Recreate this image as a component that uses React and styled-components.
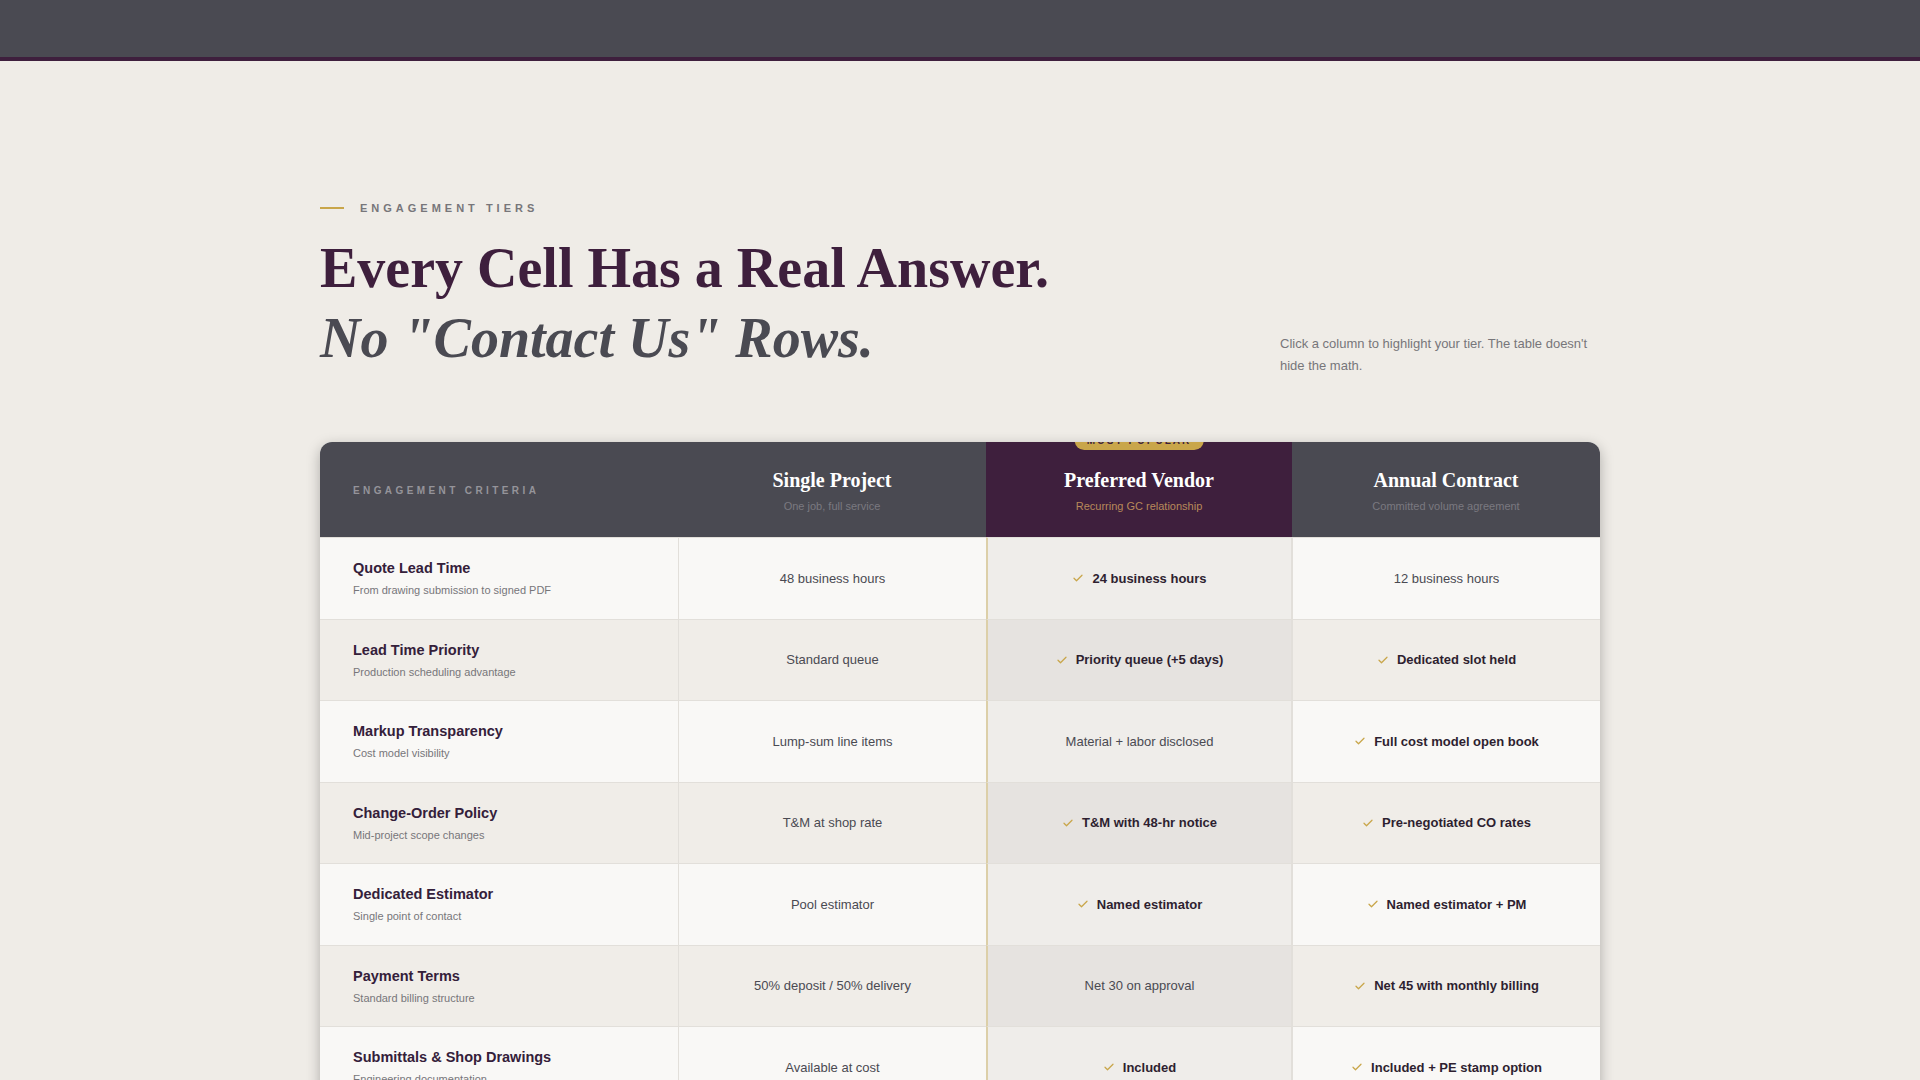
import React from 'react';
import styled, { createGlobalStyle, css } from 'styled-components';

const GlobalStyle = createGlobalStyle`
  body {
    margin: 0;
    background: #efece7;
    font-family: "Liberation Sans", Arial, sans-serif;
  }
`;

const TopBar = styled.header`
  height: 57px;
  background: #4a4a52;
  border-bottom: 4px solid #3e1f3d;
`;

const Section = styled.section`
  width: 1280px;
  margin: 0 auto;
  padding-top: 141px;
`;

const Intro = styled.div`
  display: flex;
  justify-content: space-between;
  align-items: flex-end;
`;

const Eyebrow = styled.div`
  display: flex;
  align-items: center;
  gap: 16px;
  font-size: 11px;
  font-weight: 700;
  letter-spacing: 4px;
  color: #77767a;

  &::before {
    content: '';
    width: 24px;
    height: 2px;
    background: #c9a64a;
  }
`;

const Title = styled.h1`
  margin: 19px 0 0;
  font-family: "Liberation Serif", "Times New Roman", serif;
  font-size: 56px;
  line-height: 70px;
  font-weight: 700;
  color: #3e1f3d;
`;

const TitleItalic = styled.span`
  display: block;
  font-style: italic;
  color: #4a4a52;
`;

const Lead = styled.p`
  width: 320px;
  margin: 0 0 -4px;
  font-size: 13px;
  line-height: 22px;
  color: #77767a;
`;

const Table = styled.div`
  margin-top: 69px;
  display: grid;
  grid-template-columns: 358px 308px 306px 308px;
  grid-template-rows: 95px;
  grid-auto-rows: 81.5px;
  border-radius: 12px;
  overflow: hidden;
  box-shadow: 0 4px 14px rgba(0, 0, 0, 0.28);
  background: #f9f8f6;
`;

const HeadCell = styled.div`
  position: relative;
  display: flex;
  flex-direction: column;
  justify-content: center;
  align-items: center;
  padding-top: 2px;
  background: ${({ $featured }) => ($featured ? '#3e1f3d' : '#4a4a52')};
  ${({ $label }) =>
    $label &&
    css`
      align-items: flex-start;
      padding-left: 33px;
    `}
`;

const HeadLabel = styled.div`
  font-size: 10px;
  font-weight: 700;
  letter-spacing: 3.4px;
  color: #95949a;
`;

const HeadTitle = styled.div`
  font-family: "Liberation Serif", "Times New Roman", serif;
  font-size: 20px;
  font-weight: 700;
  color: #ffffff;
`;

const HeadSub = styled.div`
  margin-top: 8px;
  font-size: 11px;
  color: ${({ $featured }) => ($featured ? '#b8895a' : '#7a7980')};
`;

const Badge = styled.div`
  position: absolute;
  top: -11px;
  left: 50%;
  transform: translateX(-50%);
  padding: 4px 12px;
  border-radius: 10px;
  background: #c9a64a;
  font-size: 10px;
  font-weight: 700;
  letter-spacing: 2px;
  color: #3e1f3d;
  white-space: nowrap;
`;

const rowBg = (even, featured) =>
  featured ? (even ? '#e6e3e0' : '#efedea') : even ? '#f0ede8' : '#f9f8f6';

const Cell = styled.div`
  box-sizing: border-box;
  display: flex;
  align-items: center;
  justify-content: center;
  gap: 8px;
  border-top: 1px solid #e2dfda;
  border-left: 1px solid #e2dfda;
  background: ${({ $even, $featured }) => rowBg($even, $featured)};
  font-size: 13px;
  color: ${({ $strong }) => ($strong ? '#2e1f30' : '#4a4a52')};
  font-weight: ${({ $strong }) => ($strong ? 700 : 400)};
  ${({ $featured }) =>
    $featured &&
    css`
      border-left: 2px solid #dccfa8;
      border-right: 1px solid #e2dfda;
    `}
`;

const CriteriaCell = styled(Cell)`
  flex-direction: column;
  align-items: flex-start;
  justify-content: center;
  gap: 0;
  padding-left: 33px;
  border-left: none;
`;

const CriteriaName = styled.div`
  font-size: 14.5px;
  font-weight: 700;
  color: #34203a;
`;

const CriteriaNote = styled.div`
  margin-top: 8px;
  font-size: 11px;
  color: #77767a;
`;

const Check = () => (
  <svg width="12" height="12" viewBox="0 0 24 24" fill="none" stroke="#c9a64a" strokeWidth="2.5" strokeLinecap="round" strokeLinejoin="round">
    <path d="M4 12.5l5 5L20 6.5" />
  </svg>
);

const tiers = [
  { name: 'Single Project', sub: 'One job, full service' },
  { name: 'Preferred Vendor', sub: 'Recurring GC relationship', featured: true },
  { name: 'Annual Contract', sub: 'Committed volume agreement' },
];

const rows = [
  ['Quote Lead Time', 'From drawing submission to signed PDF', ['48 business hours'], ['24 business hours', 1], ['12 business hours']],
  ['Lead Time Priority', 'Production scheduling advantage', ['Standard queue'], ['Priority queue (+5 days)', 1], ['Dedicated slot held', 1]],
  ['Markup Transparency', 'Cost model visibility', ['Lump-sum line items'], ['Material + labor disclosed'], ['Full cost model open book', 1]],
  ['Change-Order Policy', 'Mid-project scope changes', ['T&M at shop rate'], ['T&M with 48-hr notice', 1], ['Pre-negotiated CO rates', 1]],
  ['Dedicated Estimator', 'Single point of contact', ['Pool estimator'], ['Named estimator', 1], ['Named estimator + PM', 1]],
  ['Payment Terms', 'Standard billing structure', ['50% deposit / 50% delivery'], ['Net 30 on approval'], ['Net 45 with monthly billing', 1]],
  ['Submittals & Shop Drawings', 'Engineering documentation', ['Available at cost'], ['Included', 1], ['Included + PE stamp option', 1]],
];

export default function App() {
  return (
    <>
      <GlobalStyle />
      <TopBar />
      <Section>
        <Intro>
          <div>
            <Eyebrow>ENGAGEMENT TIERS</Eyebrow>
            <Title>
              Every Cell Has a Real Answer.
              <TitleItalic>No "Contact Us" Rows.</TitleItalic>
            </Title>
          </div>
          <Lead>Click a column to highlight your tier. The table doesn't hide the math.</Lead>
        </Intro>

        <Table>
          <HeadCell $label>
            <HeadLabel>ENGAGEMENT CRITERIA</HeadLabel>
          </HeadCell>
          {tiers.map(t => (
            <HeadCell key={t.name} $featured={t.featured}>
              {t.featured && <Badge>MOST POPULAR</Badge>}
              <HeadTitle>{t.name}</HeadTitle>
              <HeadSub $featured={t.featured}>{t.sub}</HeadSub>
            </HeadCell>
          ))}
          {rows.map(([name, note, ...cells], i) => (
            <React.Fragment key={name}>
              <CriteriaCell $even={i % 2 === 1}>
                <CriteriaName>{name}</CriteriaName>
                <CriteriaNote>{note}</CriteriaNote>
              </CriteriaCell>
              {cells.map(([text, strong], j) => (
                <Cell key={j} $even={i % 2 === 1} $featured={j === 1} $strong={!!strong}>
                  {strong && <Check />}
                  {text}
                </Cell>
              ))}
            </React.Fragment>
          ))}
        </Table>
      </Section>
    </>
  );
}
